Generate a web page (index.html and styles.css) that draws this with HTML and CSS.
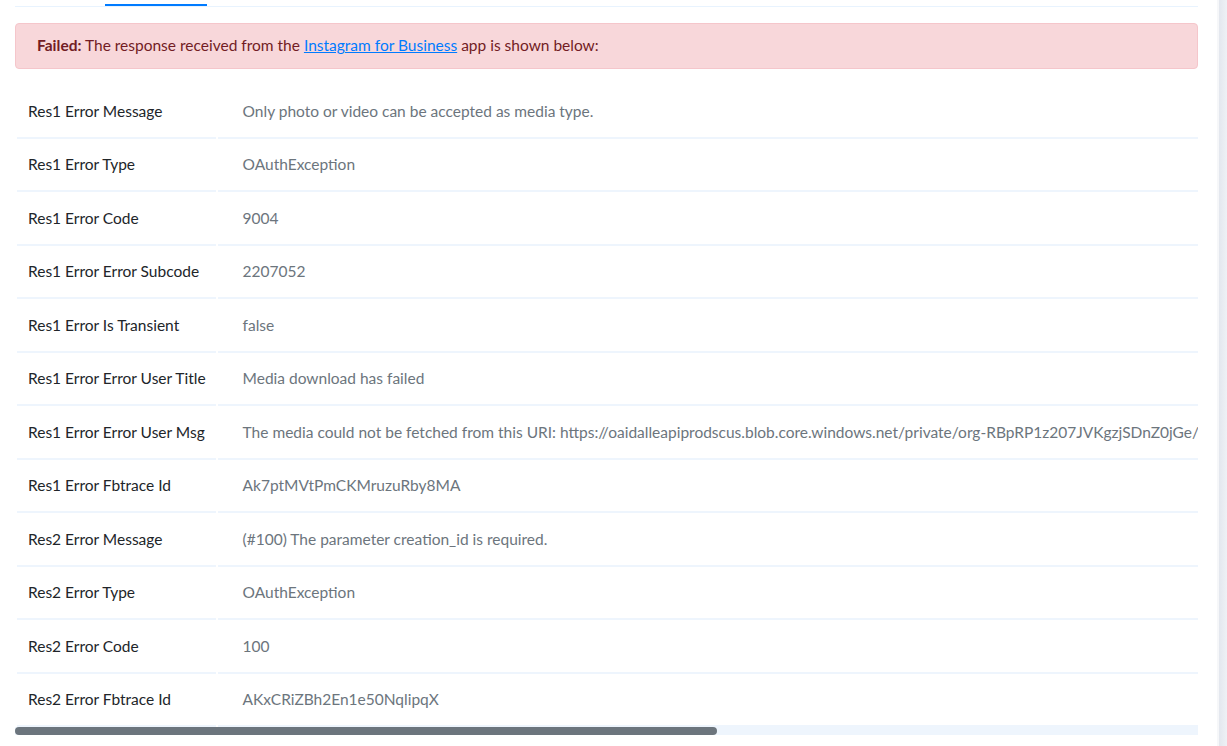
FILE: index.html
```html
<!DOCTYPE html>
<html lang="en">
<head>
    <meta charset="UTF-8">
    <meta name="viewport" content="width=device-width, initial-scale=1.0">
    <title>Task run details</title>
    <link rel="stylesheet" href="styles.css">
</head>
<body>
    <div class="layout">
        <main class="content">
            <div class="tabs">
                <span class="tab"></span>
                <span class="tab active"></span>
            </div>

            <div class="alert alert-danger">
                <strong>Failed:</strong> The response received from the <a href="#">Instagram for Business</a> app is shown below:
            </div>

            <div class="table-scroll">
                <table class="response-table">
                    <tbody>
                        <tr><td class="key">Res1 Error Message</td><td class="value">Only photo or video can be accepted as media type.</td></tr>
                        <tr><td class="key">Res1 Error Type</td><td class="value">OAuthException</td></tr>
                        <tr><td class="key">Res1 Error Code</td><td class="value">9004</td></tr>
                        <tr><td class="key">Res1 Error Error Subcode</td><td class="value">2207052</td></tr>
                        <tr><td class="key">Res1 Error Is Transient</td><td class="value">false</td></tr>
                        <tr><td class="key">Res1 Error Error User Title</td><td class="value">Media download has failed</td></tr>
                        <tr><td class="key">Res1 Error Error User Msg</td><td class="value">The media could not be fetched from this URI: https://oaidalleapiprodscus.blob.core.windows.net/private/org-RBpRP1z207JVKgzjSDnZ0jGe/user-Vq8LmT3xKp2nR6wYcB1aZd9F/img-4hJk8sLm2Pq7WxVn3Rt5YbZc.png?st=2024-05-14T09%3A12%3A44Z&amp;sp=r.</td></tr>
                        <tr><td class="key">Res1 Error Fbtrace Id</td><td class="value">Ak7ptMVtPmCKMruzuRby8MA</td></tr>
                        <tr><td class="key">Res2 Error Message</td><td class="value">(#100) The parameter creation_id is required.</td></tr>
                        <tr><td class="key">Res2 Error Type</td><td class="value">OAuthException</td></tr>
                        <tr><td class="key">Res2 Error Code</td><td class="value">100</td></tr>
                        <tr><td class="key">Res2 Error Fbtrace Id</td><td class="value">AKxCRiZBh2En1e50NqlipqX</td></tr>
                    </tbody>
                </table>
            </div>
            <div class="h-scrollbar">
                <div class="h-scrollbar-thumb" style="width: 59.3%"></div>
            </div>
        </main>
        <aside class="side-edge"></aside>
    </div>
</body>
</html>
```

FILE: styles.css
```css
:root {
    --primary-color: #007bff;
    --text-color: #212529;
    --muted-color: #6c757d;
    --line-color: #eef5fd;
    --danger-bg: #f8d7da;
    --danger-border: #f5c6cb;
    --danger-text: #721c24;
}

* {
    margin: 0;
    padding: 0;
    box-sizing: border-box;
}

html, body {
    height: 100%;
    overflow: hidden;
}

body {
    font-family: Lato, "Open Sans", "Liberation Sans", sans-serif;
    font-size: 15.5px;
    line-height: 22.5px;
    color: var(--text-color);
    background-color: #fff;
}

.layout {
    display: flex;
    height: 100%;
}

.content {
    flex: 1;
    min-width: 0;
    padding: 0 19px 0 15px;
}

.side-edge {
    width: 10px;
    border-left: 2px solid #f6f7f9;
    background: linear-gradient(to right, #e3e7ee, #eef1f5);
}

/* tab strip, scrolled mostly out of view */
.tabs {
    display: flex;
    height: 7px;
    border-bottom: 1px solid #e8f3fe;
}

.tab {
    width: 90px;
}

.tab.active {
    width: 102px;
    height: 6px;
    border-bottom: 2px solid var(--primary-color);
}

.alert {
    margin: 16px 0 16.5px;
    padding: 10px 21px 11px;
    border: 1px solid var(--danger-border);
    border-radius: 4px;
    background-color: var(--danger-bg);
    color: var(--danger-text);
}

.alert strong {
    font-weight: 700;
}

.alert a {
    color: var(--primary-color);
    text-decoration: underline;
}

.table-scroll {
    overflow: hidden;
}

/* custom horizontal scrollbar under the table */
.h-scrollbar {
    height: 8px;
    background-color: var(--line-color);
}

.h-scrollbar-thumb {
    height: 100%;
    background-color: var(--muted-color);
    border-radius: 4px;
}

.response-table {
    border-collapse: separate;
    border-spacing: 2px 0;
}

.response-table td {
    padding: 14.5px 10px 14.5px 11px;
    border-bottom: 2px solid var(--line-color);
    white-space: nowrap;
    vertical-align: middle;
}

.response-table .key {
    width: 198px;
    min-width: 198px;
    color: var(--text-color);
}

.response-table .value {
    padding-left: 25px;
    color: var(--muted-color);
}
```
